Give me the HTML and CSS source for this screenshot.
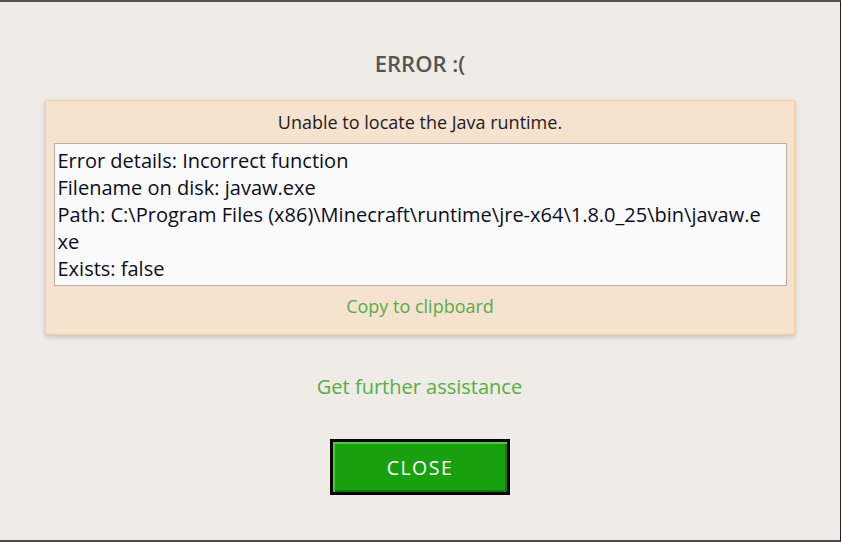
FILE: index.html
```html
<!DOCTYPE html>
<html>
<head>
<meta charset="utf-8">
<link rel="stylesheet" href="styles.css">
</head>
<body>
<div class="window">
  <h1 class="title">ERROR :(</h1>
  <div class="panel">
    <div class="panel-title">Unable to locate the Java runtime.</div>
    <div class="details">
      <div>Error details: Incorrect function</div>
      <div>Filename on disk: javaw.exe</div>
      <div>Path: C:\Program Files (x86)\Minecraft\runtime\jre-x64\1.8.0_25\bin\javaw.exe</div>
      <div>Exists: false</div>
    </div>
    <a class="copy">Copy to clipboard</a>
  </div>
  <a class="assist">Get further assistance</a>
  <button class="close">CLOSE</button>
</div>
</body>
</html>
```
FILE: styles.css
```css
html, body {
  margin: 0;
  padding: 0;
}
body {
  font-family: "Open Sans", "Noto Sans", sans-serif;
}
.window {
  width: 841px;
  height: 542px;
  box-sizing: border-box;
  border-top: 2px solid #555350;
  border-right: 1px solid #1e1e1e;
  border-bottom: 2px solid #4c4c4a;
  background: #efebe6;
  display: flex;
  flex-direction: column;
  align-items: center;
}
.title {
  margin: 46px 0 0 0;
  font-size: 22px;
  line-height: 30px;
  font-weight: 600;
  color: #555555;
}
.panel {
  margin-top: 22px;
  margin-right: 1px;
  width: 750px;
  box-sizing: border-box;
  background: #f5e2cf;
  border: 1px solid #f7cf9c;
  box-shadow: 0 2px 5px rgba(0, 0, 0, 0.18);
  padding: 9px 7px 16px 8px;
  display: flex;
  flex-direction: column;
  align-items: center;
}
.panel-title {
  font-size: 18px;
  line-height: 24px;
  color: #1c1c1c;
}
.details {
  margin-top: 9px;
  align-self: stretch;
  background: #fafafa;
  border: 1px solid #b9adab;
  padding: 3px 21px 3px 3px;
  font-size: 20px;
  line-height: 27px;
  color: #0d0d1f;
  word-break: break-all;
}
.copy {
  margin-top: 8px;
  font-size: 18px;
  line-height: 24px;
  color: #55ae48;
}
.assist {
  margin-top: 38px;
  font-size: 20px;
  line-height: 28px;
  color: #55ae48;
  margin-right: 1px;
}
.close {
  margin-top: 38px;
  width: 180px;
  height: 56px;
  box-sizing: border-box;
  border: 3px solid #000;
  background: #19a00f;
  box-shadow: inset 2px 2px 0 #4fc647, inset -2px -2px 0 #0b7a06;
  color: #ffffff;
  font-family: "Open Sans", "Noto Sans", sans-serif;
  font-size: 19.5px;
  letter-spacing: 1.5px;
  padding: 0;
}
```
